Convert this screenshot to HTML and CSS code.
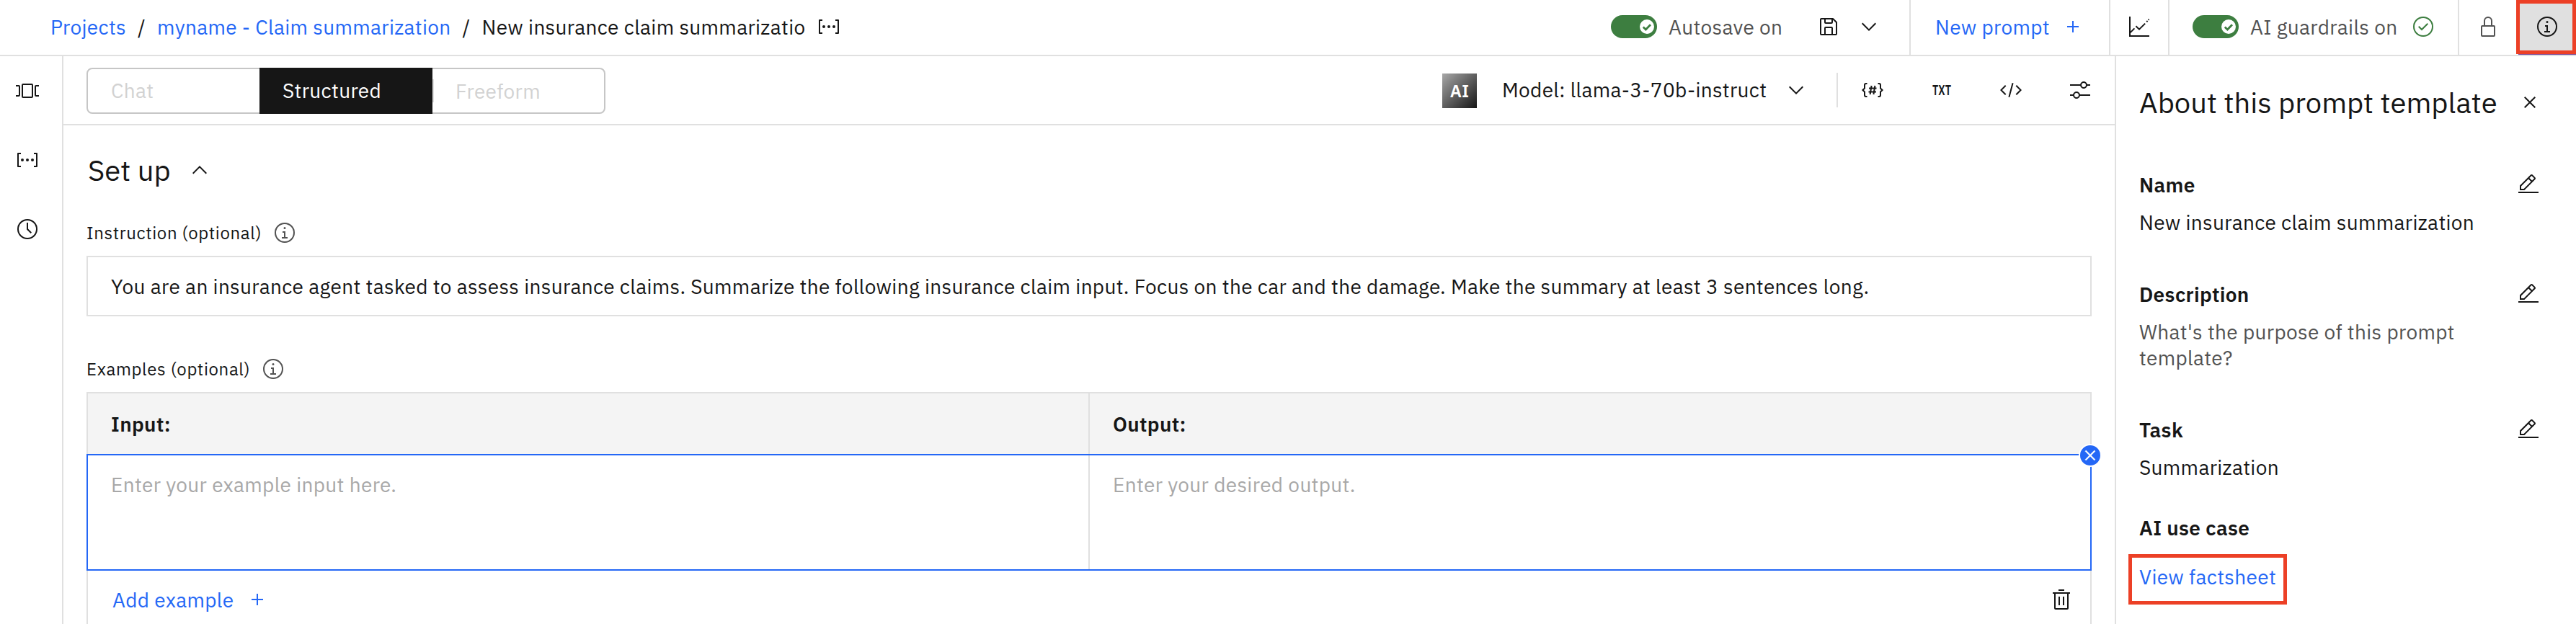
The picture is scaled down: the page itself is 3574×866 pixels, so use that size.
FILE: index.html
```html
<!DOCTYPE html>
<html lang="en">
<head>
<meta charset="utf-8">
<title>Prompt Lab</title>
<link rel="stylesheet" href="styles.css">
</head>
<body>
<svg class="sprite" aria-hidden="true">
  <symbol id="parameter" viewBox="0 0 32 32"><circle cx="9" cy="16" r="2"/><circle cx="16" cy="16" r="2"/><circle cx="23" cy="16" r="2"/><path d="M29 26H25V24h3V8H25V6h4a1 1 0 0 1 1 1V25a1 1 0 0 1-1 1zM7 26H3a1 1 0 0 1-1-1V7A1 1 0 0 1 3 6H7V8H4V24H7z"/></symbol>
  <symbol id="carousel" viewBox="0 0 32 32"><path d="M22 26H10a2 2 0 0 1-2-2V8a2 2 0 0 1 2-2H22a2 2 0 0 1 2 2V24a2 2 0 0 1-2 2zM10 8V24H22V8zM4 24H0V22H4V10H0V8H4a2 2 0 0 1 2 2V22a2 2 0 0 1-2 2zM32 24H28a2 2 0 0 1-2-2V10a2 2 0 0 1 2-2h4v2H28V22h4z"/></symbol>
  <symbol id="time" viewBox="0 0 32 32"><path d="M16 30A14 14 0 1 1 30 16 14 14 0 0 1 16 30zM16 4A12 12 0 1 0 28 16 12 12 0 0 0 16 4z"/><path d="M20.59 22 15 16.41V7h2v8.58l5 5.01z"/></symbol>
  <symbol id="info" viewBox="0 0 32 32"><path d="M17 22V14H13v2h2v6H12v2h8V22zM16 8a1.5 1.5 0 1 0 1.5 1.5A1.5 1.5 0 0 0 16 8z"/><path d="M16 30A14 14 0 1 1 30 16 14 14 0 0 1 16 30zM16 4A12 12 0 1 0 28 16 12 12 0 0 0 16 4z"/></symbol>
  <symbol id="save" viewBox="0 0 32 32"><path d="M27.71 9.29l-5-5A1 1 0 0 0 22 4H6A2 2 0 0 0 4 6V26a2 2 0 0 0 2 2H26a2 2 0 0 0 2-2V10A1 1 0 0 0 27.71 9.29zM12 6h8v4H12zm8 20H12V18h8zm2 0V18a2 2 0 0 0-2-2H12a2 2 0 0 0-2 2v8H6V6h4v4a2 2 0 0 0 2 2h8a2 2 0 0 0 2-2V6.41l4 4V26z"/></symbol>
  <symbol id="chevron-down" viewBox="0 0 16 16"><path d="M8 11 3 6 3.7 5.3 8 9.6 12.3 5.3 13 6z"/></symbol>
  <symbol id="chevron-up" viewBox="0 0 16 16"><path d="M8 5 13 10 12.3 10.7 8 6.4 3.7 10.7 3 10z"/></symbol>
  <symbol id="add" viewBox="0 0 32 32"><path d="M17 15V8H15v7H8v2h7v7h2V17h7V15z"/></symbol>
  <symbol id="chart" viewBox="0 0 32 32"><path d="M3 2V29H30M3.4 24.4 9.4 18.4M11.4 15.2l4.6 4.4 8.2-8M26.2 9.4l1.4-1.4M28.6 6.8l1-1" fill="none" stroke="currentColor" stroke-width="2"/></symbol>
  <symbol id="check-outline" viewBox="0 0 32 32"><path d="M14 21.414 9 16.413 10.413 15 14 18.586 21.585 11 23 12.415z"/><path d="M16 2A14 14 0 1 0 30 16 14 14 0 0 0 16 2zm0 26A12 12 0 1 1 28 16 12 12 0 0 1 16 28z"/></symbol>
  <symbol id="locked" viewBox="0 0 32 32"><path d="M24 14H22V8A6 6 0 0 0 10 8v6H8a2 2 0 0 0-2 2V28a2 2 0 0 0 2 2H24a2 2 0 0 0 2-2V16A2 2 0 0 0 24 14zM12 8a4 4 0 0 1 8 0v6H12zM24 28H8V16H24z"/></symbol>
  <symbol id="close" viewBox="0 0 32 32"><path d="M17.414 16 24 9.414 22.586 8 16 14.586 9.414 8 8 9.414 14.586 16 8 22.586 9.414 24 16 17.414 22.586 24 24 22.586z"/></symbol>
  <symbol id="edit" viewBox="0 0 32 32"><path d="M2 26H30V28H2zM25.4 9c.8-.8.8-2 0-2.8l-3.6-3.6c-.8-.8-2-.8-2.8 0l-15 15V24h6.4L25.4 9zM20.4 4 24 7.6l-3 3L17.4 7 20.4 4zM6 22v-3.6l10-10 3.6 3.6-10 10H6z"/></symbol>
  <symbol id="trash" viewBox="0 0 32 32"><path d="M12 12H14V24H12zM18 12H20V24H18zM4 6V8H6V28a2 2 0 0 0 2 2H24a2 2 0 0 0 2-2V8h2V6zM8 28V8H24V28zM12 2H20V4H12z"/></symbol>
  <symbol id="sliders" viewBox="0 0 32 32"><path d="M30 8h-4.1c-.5-2.3-2.5-4-4.9-4s-4.4 1.7-4.9 4H2v2h14.1c.5 2.3 2.5 4 4.9 4s4.4-1.7 4.9-4H30V8zM21 12c-1.7 0-3-1.3-3-3s1.3-3 3-3 3 1.3 3 3S22.7 12 21 12zM2 24h4.1c.5 2.3 2.5 4 4.9 4s4.4-1.7 4.9-4H30v-2H15.9c-.5-2.3-2.5-4-4.9-4s-4.4 1.7-4.9 4H2V24zM11 20c1.7 0 3 1.3 3 3s-1.3 3-3 3-3-1.3-3-3S9.3 20 11 20z"/></symbol>
  <symbol id="code" viewBox="0 0 32 32"><path d="M31 16 24 23 22.59 21.59 28.17 16 22.59 10.41 24 9zM1 16 8 9 9.41 10.41 3.83 16 9.41 21.59 8 23zM12.42 25.484 17.64 6l1.932.518L14.352 26z"/></symbol>
  <symbol id="variables" viewBox="0 0 32 32"><path d="M8.5 7H7a2 2 0 0 0-2 2v4.500L2.400 16 5 18.500V23a2 2 0 0 0 2 2h1.500M23.500 7H25a2 2 0 0 1 2 2v4.500L29.600 16 27 18.500V23a2 2 0 0 1-2 2h-1.500M14.600 10 12.600 22M19.400 10l-2 12M11 13.500H21.500M10.500 18.500H21" fill="none" stroke="currentColor" stroke-width="2"/></symbol>
  <symbol id="knob" viewBox="0 0 20 20"><circle cx="10" cy="10" r="10" fill="#fff"/><path d="M4.800 10.600 8.400 14 15 7.200" fill="none" stroke="#3d7e40" stroke-width="2.800"/></symbol>
</svg>

<header class="header">
  <nav class="crumbs">
    <a class="link">Projects</a><span class="slash">/</span><a class="link">myname - Claim summarization</a><span class="slash">/</span><span>New insurance claim summarizatio</span>
    <svg class="icon crumb-icon"><use href="#parameter"/></svg>
  </nav>
  <div class="actions">
    <div class="cell autosave">
      <span class="toggle"><svg class="knob"><use href="#knob"/></svg></span>
      <span class="secondary grow">Autosave on</span>
      <svg class="icon"><use href="#save"/></svg>
      <svg class="icon autosave-more"><use href="#chevron-down"/></svg>
    </div>
    <div class="cell new-prompt link"><span class="grow">New prompt</span><svg class="icon"><use href="#add"/></svg></div>
    <div class="cell chart"><svg class="icon"><use href="#chart"/></svg></div>
    <div class="cell guardrails">
      <span class="toggle"><svg class="knob"><use href="#knob"/></svg></span>
      <span class="secondary grow">AI guardrails on</span>
      <svg class="icon green"><use href="#check-outline"/></svg>
    </div>
    <div class="cell lock secondary"><svg class="icon"><use href="#locked"/></svg></div>
    <div class="info-tab"><svg class="icon"><use href="#info"/></svg><span class="callout callout-info"></span></div>
  </div>
</header>

<div class="body">
  <aside class="rail">
    <svg class="icon"><use href="#carousel"/></svg>
    <svg class="icon"><use href="#parameter"/></svg>
    <svg class="icon"><use href="#time"/></svg>
  </aside>

  <main class="main">
    <div class="toolbar">
      <div class="switcher">
        <span class="tab">Chat</span><span class="tab tab-active">Structured</span><span class="tab tab-last">Freeform</span>
      </div>
      <div class="tools">
        <span class="ai">AI</span>
        <span class="model">Model: llama-3-70b-instruct</span>
        <svg class="icon"><use href="#chevron-down"/></svg>
        <span class="rule"></span>
        <div class="tool-icons">
          <svg class="icon"><use href="#variables"/></svg>
          <svg class="icon icon-text" viewBox="0 0 32 32"><text class="txt" x="3" y="23" textLength="26" lengthAdjust="spacingAndGlyphs">TXT</text></svg>
          <svg class="icon"><use href="#code"/></svg>
          <svg class="icon"><use href="#sliders"/></svg>
        </div>
      </div>
    </div>

    <div class="content">
      <h1 class="heading"><span class="heading-text">Set up</span><svg class="icon"><use href="#chevron-up"/></svg></h1>
      <div class="label label-instruction"><span class="instruction-text">Instruction (optional)</span><svg class="icon secondary"><use href="#info"/></svg></div>
      <div class="field">You are an insurance agent tasked to assess insurance claims. Summarize the following insurance claim input. Focus on the car and the damage. Make the summary at least 3 sentences long.</div>
      <div class="label label-examples"><span class="examples-text">Examples (optional)</span><svg class="icon secondary"><use href="#info"/></svg></div>
      <div class="table">
        <div class="row row-head"><div class="col col-first">Input:</div><div class="col">Output:</div></div>
        <div class="row row-edit">
          <div class="col col-first">Enter your example input here.</div><div class="col">Enter your desired output.</div>
          <span class="remove"><svg class="icon-remove"><use href="#close"/></svg></span>
        </div>
        <div class="row row-foot">
          <span class="link add"><span class="add-text">Add example</span><svg class="icon"><use href="#add"/></svg></span>
          <svg class="icon"><use href="#trash"/></svg>
        </div>
      </div>
    </div>
  </main>

  <aside class="panel">
    <div class="panel-title"><span>About this prompt template</span><svg class="icon"><use href="#close"/></svg></div>
    <section class="item"><div class="item-head"><span>Name</span><svg class="icon"><use href="#edit"/></svg></div><div>New insurance claim summarization</div></section>
    <section class="item"><div class="item-head"><span>Description</span><svg class="icon"><use href="#edit"/></svg></div><div class="secondary hint">What's the purpose of this prompt template?</div></section>
    <section class="item item-task"><div class="item-head"><span>Task</span><svg class="icon"><use href="#edit"/></svg></div><div>Summarization</div></section>
    <section class="item"><div class="item-head item-head-link"><span>AI use case</span></div><a class="link factsheet">View factsheet<span class="callout callout-factsheet"></span></a></section>
  </aside>
</div>
</body>
</html>
```

FILE: styles.css
```css
* { box-sizing: border-box; }
body {
  margin: 0;
  width: 3574px;
  height: 866px;
  overflow: hidden;
  background: #fff;
  color: #161616;
  font: 400 28px/36px "IBM Plex Sans", Roboto, sans-serif;
  letter-spacing: 0.33px;
  display: flex;
  flex-direction: column;
}
.sprite { display: none; }
.icon { width: 32px; height: 32px; flex: none; fill: currentColor; display: block; }
.icon-text { overflow: visible; }
.link { color: #2467f6; }
.secondary { color: #525252; }
.green { color: #3d7e40; }
.grow { flex: 1; white-space: nowrap; }

/* Header */
.header { height: 78px; flex: none; border-bottom: 2px solid #e0e0e0; display: flex; justify-content: space-between; }
.crumbs { display: flex; align-items: center; padding-left: 70px; white-space: nowrap; }
.slash { width: 43px; text-align: center; }
.crumb-icon { margin-left: 17px; margin-bottom: 2px; }
.actions { display: flex; }
.cell { display: flex; align-items: center; padding-bottom: 2px; border-left: 2px solid #e0e0e0; }
.autosave { width: 414px; border-left: 0; padding-right: 40px; }
.autosave-more { margin-left: 24px; }
.new-prompt { width: 277px; padding-left: 34px; padding-right: 34px; }
.chart { width: 82px; padding-left: 24px; }
.guardrails { width: 402px; padding-left: 32px; padding-right: 32px; }
.lock { width: 84px; padding-left: 24px; }
.cell .grow { padding-top: 2px; }
.toggle { width: 64px; height: 32px; margin-right: 16px; border-radius: 16px; background: #3d7e40; display: flex; align-items: center; justify-content: flex-end; padding-right: 4px; }
.knob { width: 20px; height: 20px; }
.info-tab { position: relative; width: 80px; height: 76px; padding-bottom: 2px; background: #e0e0e0; border-bottom: 1px solid #7d4a97; display: flex; align-items: center; justify-content: center; }
.callout { position: absolute; border: 5px solid #ec4026; }
.callout-info { left: -3px; top: 0; width: 83px; height: 75px; }

/* Side rail */
.body { flex: 1; display: flex; min-height: 0; }
.rail { width: 88px; border-right: 2px solid #e0e0e0; padding: 32px 0 0 22px; display: flex; flex-direction: column; gap: 64px; }

/* Toolbar */
.main { width: 2846px; }
.toolbar { height: 96px; border-bottom: 2px solid #e0e0e0; padding: 0 32px; display: flex; align-items: center; justify-content: space-between; }
.switcher { margin-top: 2px; width: 720px; height: 64px; border: 2px solid #c6c6c6; border-radius: 8px; display: flex; align-items: center; color: #d2d2d2; }
.tab { width: 238px; padding-left: 32px; }
.tab-active { width: 240px; height: 64px; margin: -2px 0; padding-top: 14px; background: #161616; color: #fff; }
.tab-last { height: 32px; line-height: 34px; padding-left: 30px; border-left: 2px solid #e0e0e0; }
.tools { display: flex; align-items: center; }
.ai { margin: 2px 35px 0 0; width: 48px; height: 48px; background: linear-gradient(135deg, #a8a8a8, #161616); color: #fff; font-size: 24px; font-weight: 600; line-height: 49px; letter-spacing: 0; text-align: center; }
.model { width: 392px; white-space: nowrap; }
.rule { width: 2px; height: 48px; margin: 0 32px 0 40px; background: #e0e0e0; }
.tool-icons { display: flex; gap: 64px; }
.txt { font: 600 20px "IBM Plex Sans", Roboto, sans-serif; letter-spacing: 0; }

/* Set up section */
.content { padding: 34px 32px 0; }
.heading { margin: 0; height: 56px; padding-left: 2px; font-size: 40px; line-height: 56px; font-weight: 400; letter-spacing: 0; display: flex; align-items: center; }
.heading-text { width: 139px; }
.label { height: 32px; font-size: 24px; line-height: 32px; letter-spacing: 0.64px; display: flex; align-items: center; margin-bottom: 16px; }
.label-instruction { margin-top: 43px; }
.label-examples { margin-top: 57px; }
.instruction-text { width: 259px; }
.examples-text { width: 243px; }
.field { height: 84px; border: 2px solid #e0e0e0; padding: 23px 32px 0; white-space: nowrap; }

/* Examples table */
.row { display: flex; }
.col { flex: 1; padding-left: 32px; }
.col-first { flex: none; width: 1390px; border-right: 2px solid #e0e0e0; }
.row-head { height: 86px; border: 2px solid #e0e0e0; border-bottom: 0; background: #f4f4f4; font-weight: 600; }
.row-head .col { padding-top: 25px; }
.row-edit { position: relative; height: 162px; border: 2px solid #2467f6; color: #a8a8a8; }
.row-edit .col { padding-top: 23px; }
.remove { position: absolute; top: -16px; right: -16px; width: 32px; height: 32px; border: 2px solid #fff; border-radius: 50%; background: #2467f6; display: flex; align-items: center; justify-content: center; color: #fff; }
.icon-remove { width: 28px; height: 28px; flex: none; fill: currentColor; stroke: currentColor; stroke-width: 0.6; }
.row-foot { height: 80px; border: solid #e0e0e0; border-width: 0 2px; padding: 0 24px 0 34px; align-items: center; justify-content: space-between; }
.add { display: flex; align-items: center; }
.add-text { width: 185px; padding-top: 2px; }

/* About panel */
.panel { width: 640px; border-left: 2px solid #e0e0e0; padding: 36px 48px 0 32px; }
.panel-title { height: 56px; margin-bottom: 68px; font-size: 40px; line-height: 56px; letter-spacing: 0; white-space: nowrap; display: flex; align-items: center; justify-content: space-between; }
.item { margin-bottom: 63px; }
.item-task { margin-bottom: 47px; }
.item-head { height: 36px; margin-bottom: 17px; padding-right: 2px; font-weight: 600; display: flex; align-items: center; justify-content: space-between; }
.item-head span { padding-top: 2px; }
.item-head-link { margin-bottom: 33px; }
.hint { width: 460px; }
.factsheet { position: relative; display: inline-block; }
.callout-factsheet { left: -15px; top: -14px; width: 220px; height: 70px; }
```
